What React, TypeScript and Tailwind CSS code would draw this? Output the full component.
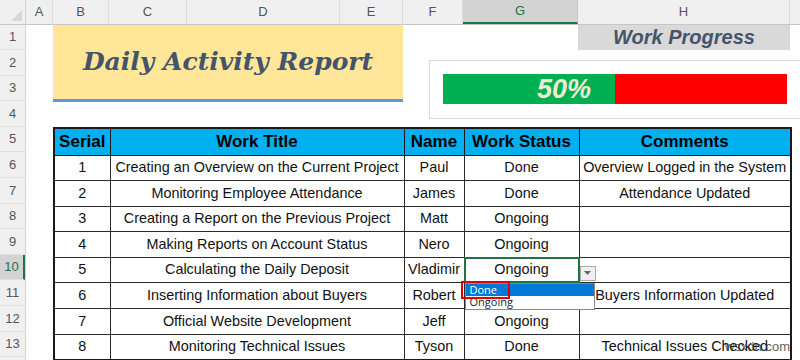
import React from 'react';

interface Task {
  serial: number;
  title: string;
  name: string;
  status: string;
  comment: string;
}

// row 6's status sits under the open dropdown, so it is left blank
const tasks: Task[] = [
  { serial: 1, title: 'Creating an Overview on the Current Project', name: 'Paul', status: 'Done', comment: 'Overview Logged in the System' },
  { serial: 2, title: 'Monitoring Employee Attendance', name: 'James', status: 'Done', comment: 'Attendance Updated' },
  { serial: 3, title: 'Creating a Report on the Previous Project', name: 'Matt', status: 'Ongoing', comment: '' },
  { serial: 4, title: 'Making Reports on Account Status', name: 'Nero', status: 'Ongoing', comment: '' },
  { serial: 5, title: 'Calculating the Daily Deposit', name: 'Vladimir', status: 'Ongoing', comment: '' },
  { serial: 6, title: 'Inserting Information about Buyers', name: 'Robert', status: '', comment: 'Buyers Information Updated' },
  { serial: 7, title: 'Official Website Development', name: 'Jeff', status: 'Ongoing', comment: '' },
  { serial: 8, title: 'Monitoring Technical Issues', name: 'Tyson', status: 'Done', comment: 'Technical Issues Checked' },
];

const columns = [
  { id: 'A', w: 'w-[27px]' },
  { id: 'B', w: 'w-[56px]' },
  { id: 'C', w: 'w-[78px]' },
  { id: 'D', w: 'w-[153px]' },
  { id: 'E', w: 'w-[63px]' },
  { id: 'F', w: 'w-[60px]' },
  { id: 'G', w: 'w-[115px]' },
  { id: 'H', w: 'w-[212px]' },
];

const rowNumbers = Array.from({ length: 13 }, (_, i) => i + 1);

const ColumnHeader: React.FC = () => (
  <div className="flex h-[24.5px] bg-[#f0f0f0] border-b border-[#c6c6c6] text-[13px] text-[#555] font-['Liberation_Sans',Arial,sans-serif]">
    <div className="relative w-[26px] shrink-0 border-r border-[#d4d4d4]">
      <svg className="absolute right-[3px] bottom-[3px]" width="11" height="11" viewBox="0 0 11 11">
        <polygon points="11,0 11,11 0,11" fill="#d6d6d6" />
      </svg>
    </div>
    {columns.map((c) => (
      <div
        key={c.id}
        className={`${c.w} shrink-0 flex items-center justify-center border-r ${
          c.id === 'G'
            ? 'bg-[#d3d3d3] text-[#217346] border-[#c6c6c6] border-b-2 border-b-[#217346]'
            : 'border-[#dcdcdc]'
        }`}
      >
        {c.id}
      </div>
    ))}
    <div className="flex-1" />
  </div>
);

const RowHeader: React.FC = () => (
  <div className="w-[26px] h-[340px] shrink-0 bg-[#f0f0f0] border-r border-[#d4d4d4] text-[13px] text-[#555] font-['Liberation_Sans',Arial,sans-serif]">
    {rowNumbers.map((n) => (
      <div
        key={n}
        className={`h-[25.6px] flex items-center justify-center border-b border-[#e0e0e0] ${
          n === 10 ? 'bg-[#d3d3d3] text-[#217346] border-r-2 border-r-[#217346]' : ''
        }`}
      >
        {n}
      </div>
    ))}
  </div>
);

const StatusDropdown: React.FC = () => (
  <>
    <div className="absolute -inset-px border-2 border-[#217346] pointer-events-none" />
    <div className="absolute left-[115px] top-[8px] w-[16px] h-[15px] bg-[#efefef] border border-[#ababab] flex items-center justify-center">
      <svg width="7" height="4" viewBox="0 0 7 4">
        <polygon points="0,0 7,0 3.5,4" fill="#666" />
      </svg>
    </div>
    <div className="absolute left-0 top-[25px] w-[130px] h-[27px] bg-white border border-[#8a8a8a] text-left text-[11px] leading-[12px] font-['Open_Sans',Arial,sans-serif] z-10">
      <div className="h-[12px] bg-[#0078d7] text-white pl-[4px]">Done</div>
      <div className="h-[12px] text-[#222] pl-[4px]">Ongoing</div>
    </div>
    <div className="absolute left-[-4px] top-[23px] w-[49px] h-[18px] border-2 border-[#e00000] z-20" />
  </>
);

const ActivityTable: React.FC = () => (
  <table className="ml-[27px] table-fixed border-collapse border-2 border-[#1a1a1a] text-center font-['Liberation_Sans',Arial,sans-serif]">
    <colgroup>
      <col className="w-[56px]" />
      <col className="w-[294px]" />
      <col className="w-[60px]" />
      <col className="w-[115px]" />
      <col className="w-[212px]" />
    </colgroup>
    <thead>
      <tr className="h-[25.6px] bg-[#00b0f0] text-[17px] font-bold text-black">
        <th className="border border-[#1a1a1a] p-0">Serial</th>
        <th className="border border-[#1a1a1a] p-0">Work Title</th>
        <th className="border border-[#1a1a1a] p-0">Name</th>
        <th className="border border-[#1a1a1a] p-0 whitespace-nowrap">Work Status</th>
        <th className="border border-[#1a1a1a] p-0">Comments</th>
      </tr>
    </thead>
    <tbody className="text-[14.4px] text-[#111]">
      {tasks.map((t) => (
        <tr key={t.serial} className="h-[25.6px]">
          <td className="border border-[#2a2a2a] p-0">{t.serial}</td>
          <td className="border border-[#2a2a2a] p-0 whitespace-nowrap">{t.title}</td>
          <td className="border border-[#2a2a2a] p-0">{t.name}</td>
          <td className="relative border border-[#2a2a2a] p-0">
            {t.status}
            {t.serial === 5 && <StatusDropdown />}
          </td>
          <td className="border border-[#2a2a2a] p-0 whitespace-nowrap">{t.comment}</td>
        </tr>
      ))}
    </tbody>
  </table>
);

const App: React.FC = () => {
  const progress = 50;

  return (
    <div className="relative w-[800px] h-[360px] overflow-hidden bg-white">
      <ColumnHeader />
      <div className="flex">
        <RowHeader />
        <div className="flex-1">
          <div className="flex h-[102.5px]">
            <div className="w-[27px] shrink-0" />
            <div className="w-[350px] h-[77.5px] shrink-0 bg-[#ffe699] border-b-[3px] border-[#5b9bd5] flex items-center justify-center">
              <span className="font-['DejaVu_Serif',serif] font-bold italic text-[25px] text-[#44546a]">
                Daily Activity Report
              </span>
            </div>
            <div className="flex flex-col">
              <div className="ml-[175px] w-[212px] h-[25.5px] bg-[#d9d9d9] flex items-center justify-center font-['Liberation_Sans',Arial,sans-serif] font-bold italic text-[20px] text-[#44546a]">
                Work Progress
              </div>
              <div className="ml-[26px] mt-[10px] w-[380px] h-[59px] bg-white border border-[#d9d9d9] pl-[13px] pt-[13px]">
                <div className="flex w-[344px] h-[30px] bg-[#ff0000]">
                  <div
                    className="h-full bg-[#00b050] flex items-center justify-end pr-[24px]"
                    style={{ width: `${progress}%` }}
                  >
                    <span className="font-['Liberation_Sans',Arial,sans-serif] font-bold italic text-[27px] leading-none text-[#eeecd4]">
                      {progress}%
                    </span>
                  </div>
                </div>
              </div>
            </div>
          </div>
          <ActivityTable />
        </div>
      </div>
      <div className="absolute right-[10px] bottom-[4px] text-[13px] text-[#333]/80 font-['Liberation_Sans',Arial,sans-serif]">
        wsxdn.com
      </div>
    </div>
  );
};

export default App;
